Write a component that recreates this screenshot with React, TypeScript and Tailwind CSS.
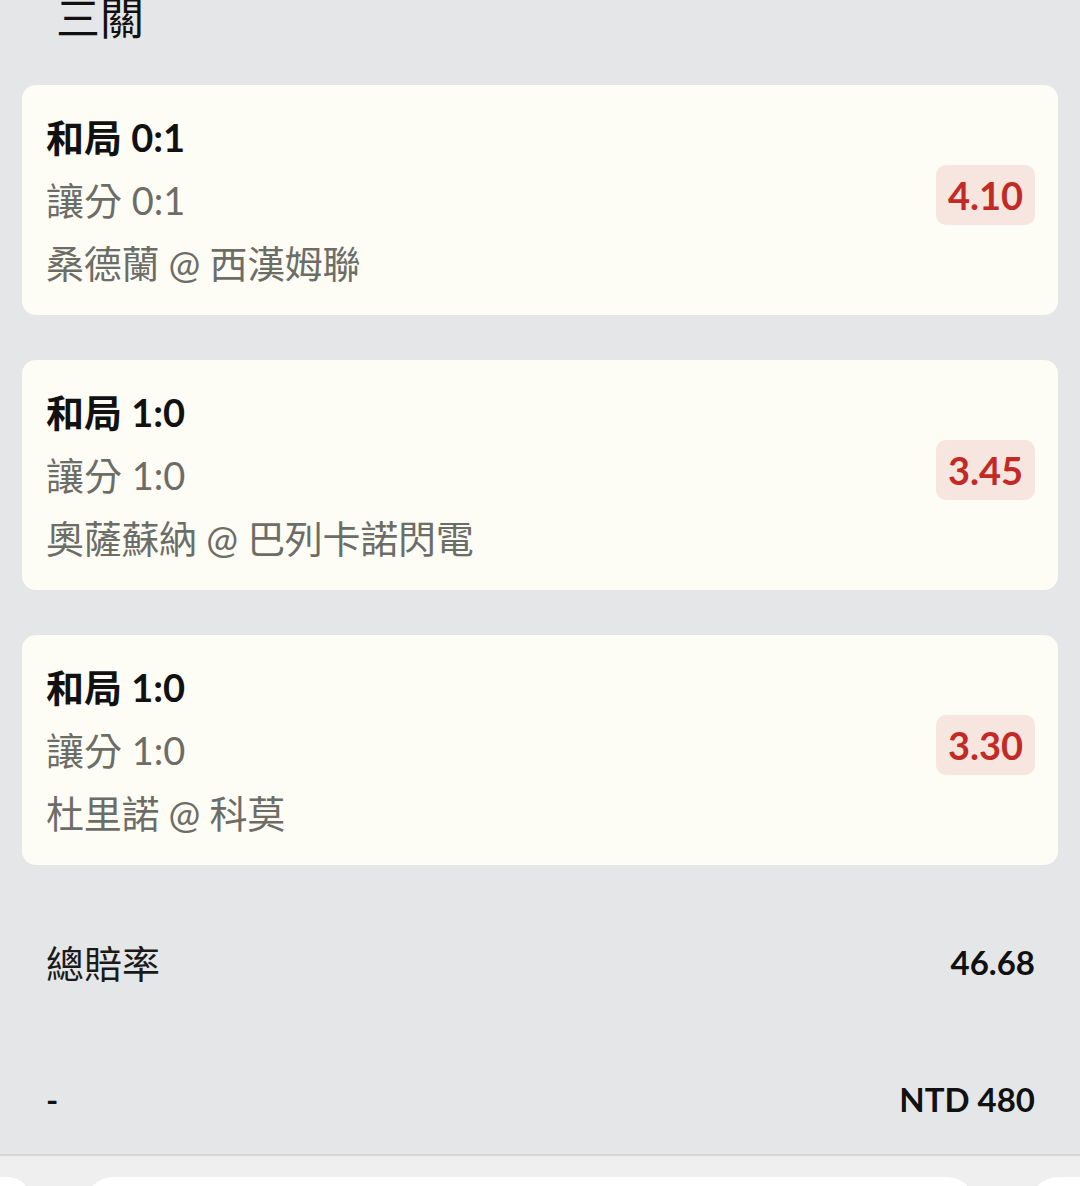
import React from "react";

type Bet = { title: string; market: string; match: string; odds: string };

const bets: Bet[] = [
  { title: "和局 0:1", market: "讓分 0:1", match: "桑德蘭 @ 西漢姆聯", odds: "4.10" },
  { title: "和局 1:0", market: "讓分 1:0", match: "奧薩蘇納 @ 巴列卡諾閃電", odds: "3.45" },
  { title: "和局 1:0", market: "讓分 1:0", match: "杜里諾 @ 科莫", odds: "3.30" },
];

function BetCard({ bet }: { bet: Bet }) {
  return (
    <div className="flex h-[230px] items-center justify-between rounded-[14px] bg-[#fdfdf5] pl-[24px] pr-[23px]">
      <div className="flex flex-col">
        <div className="text-[38px] font-bold leading-[63px] text-[#111111]">{bet.title}</div>
        <div className="text-[38px] leading-[63px] text-[#6d6d68]">{bet.market}</div>
        <div className="text-[38px] leading-[63px] tracking-[-0.3px] text-[#6d6d68]">{bet.match}</div>
      </div>
      <div className="mb-[10px] flex h-[60px] w-[99px] items-center justify-center rounded-[10px] bg-[#f7e5df] text-[38px] font-bold text-[#c22a26]">
        {bet.odds}
      </div>
    </div>
  );
}

export default function App() {
  return (
    <div className="flex h-[1186px] w-[1080px] flex-col overflow-hidden bg-[#e5e6e8] font-['Lato','Noto_Sans_CJK_TC',sans-serif]">
      <div className="h-[85px] shrink-0 pl-[56px]">
        <div className="-mt-[7px] text-[44px] leading-[50px] text-[#111111]">三關</div>
      </div>
      <div className="flex shrink-0 flex-col gap-[45px] px-[22px]">
        {bets.map((b, i) => (
          <BetCard key={i} bet={b} />
        ))}
      </div>
      <div className="flex h-[196px] shrink-0 items-center justify-between pl-[46px] pr-[45px]">
        <span className="text-[38px] text-[#1a1a1a]">總賠率</span>
        <span className="text-[33px] font-bold text-[#111111]">46.68</span>
      </div>
      <div className="flex h-[78px] shrink-0 items-center justify-between pl-[46px] pr-[45px]">
        <span className="text-[33px] font-bold text-[#111111]">-</span>
        <span className="text-[33px] font-bold text-[#111111]">NTD 480</span>
      </div>
      <div className="mt-auto flex h-[32px] shrink-0 gap-[55px] border-t-2 border-[#d5d5d5] bg-[#efefef] pt-[21px]">
        <div className="-ml-[30px] h-[40px] w-[60px] shrink-0 rounded-t-[22px] bg-white" />
        <div className="h-[40px] flex-1 rounded-t-[28px] bg-white" />
        <div className="-mr-[40px] h-[40px] w-[90px] shrink-0 rounded-t-[28px] bg-white" />
      </div>
    </div>
  );
}
